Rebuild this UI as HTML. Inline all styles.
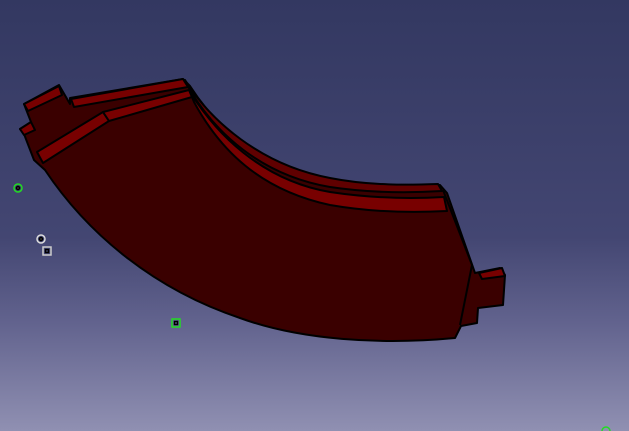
<!DOCTYPE html>
<html><head><style>html,body{margin:0;padding:0;width:629px;height:431px;overflow:hidden}</style></head><body>
<svg width="629" height="431" viewBox="0 0 629 431" xmlns="http://www.w3.org/2000/svg">
<defs><linearGradient id="bg" x1="0" y1="0" x2="0" y2="1">
<stop offset="0" stop-color="#333861"/><stop offset="0.55" stop-color="#434672"/><stop offset="0.75" stop-color="#62638e"/><stop offset="1" stop-color="#9090b2"/></linearGradient></defs>
<rect width="629" height="431" fill="url(#bg)"/>
<g stroke="#000" stroke-width="2" stroke-linejoin="round">
<path d="M20,129 L31,122 L24,104 L59,85 L70,104 L70,98 L183,79 L190,86 C215,125 260,170 330,182 C370,188 410,186 440,185 L447,193 L475,273 L500,268 L505,275 L503,305 L478,308 L477,323 L461,326 L455,338 C380,345 300,340 240,318 C150,288 85,230 45,170 L34,160 L24,134 Z" fill="#3a0000"/>
<path d="M24,104 L59,86 L62,95 L28,111 Z" fill="#780000"/>
<path d="M20,129 L31,122 L35,130 L24,135 Z" fill="#780000"/>
<path d="M71,99 L183,79 L188,87 L74,107 Z" fill="#780000"/>
<path d="M37,152 L103,112 L109,121 L43,163 Z" fill="#780000"/>
<path d="M103,112 L189,90 L192,97 L109,121 Z" fill="#780000"/>
<path d="M185,80 C210,120 260,165 330,178 C370,186 410,185 438,184 L442,191 C410,193 370,193 330,187 C260,175 215,132 190,90 Z" fill="#600000"/>
<path d="M190,92 C215,132 260,180 330,192 C370,198 410,199 444,197 L447,211 C410,213 370,212 330,205 C260,190 220,150 194,102 Z" fill="#780000"/>
<path d="M479,273 L502,268 L505,276 L482,279 Z" fill="#780000"/>
<path d="M443,190 L472,265 L460,325" fill="none"/>
</g>
<g fill="none" stroke-width="1.5">
<circle cx="18" cy="188" r="4" stroke="#22dd22"/><circle cx="18" cy="188" r="1.5" fill="#555" stroke="#000"/>
<circle cx="41" cy="239" r="4" stroke="#ddd"/><circle cx="41" cy="239" r="1.5" fill="#555" stroke="#000"/>
<rect x="43" y="247" width="8" height="8" stroke="#ccc"/><rect x="45.5" y="249.5" width="3" height="3" stroke="#000"/>
<rect x="172" y="319" width="8" height="8" stroke="#22dd22"/><rect x="174.5" y="321.5" width="3" height="3" stroke="#000"/>
<circle cx="606" cy="431" r="4" stroke="#22dd22"/>
</g>
</svg>
</body></html>
